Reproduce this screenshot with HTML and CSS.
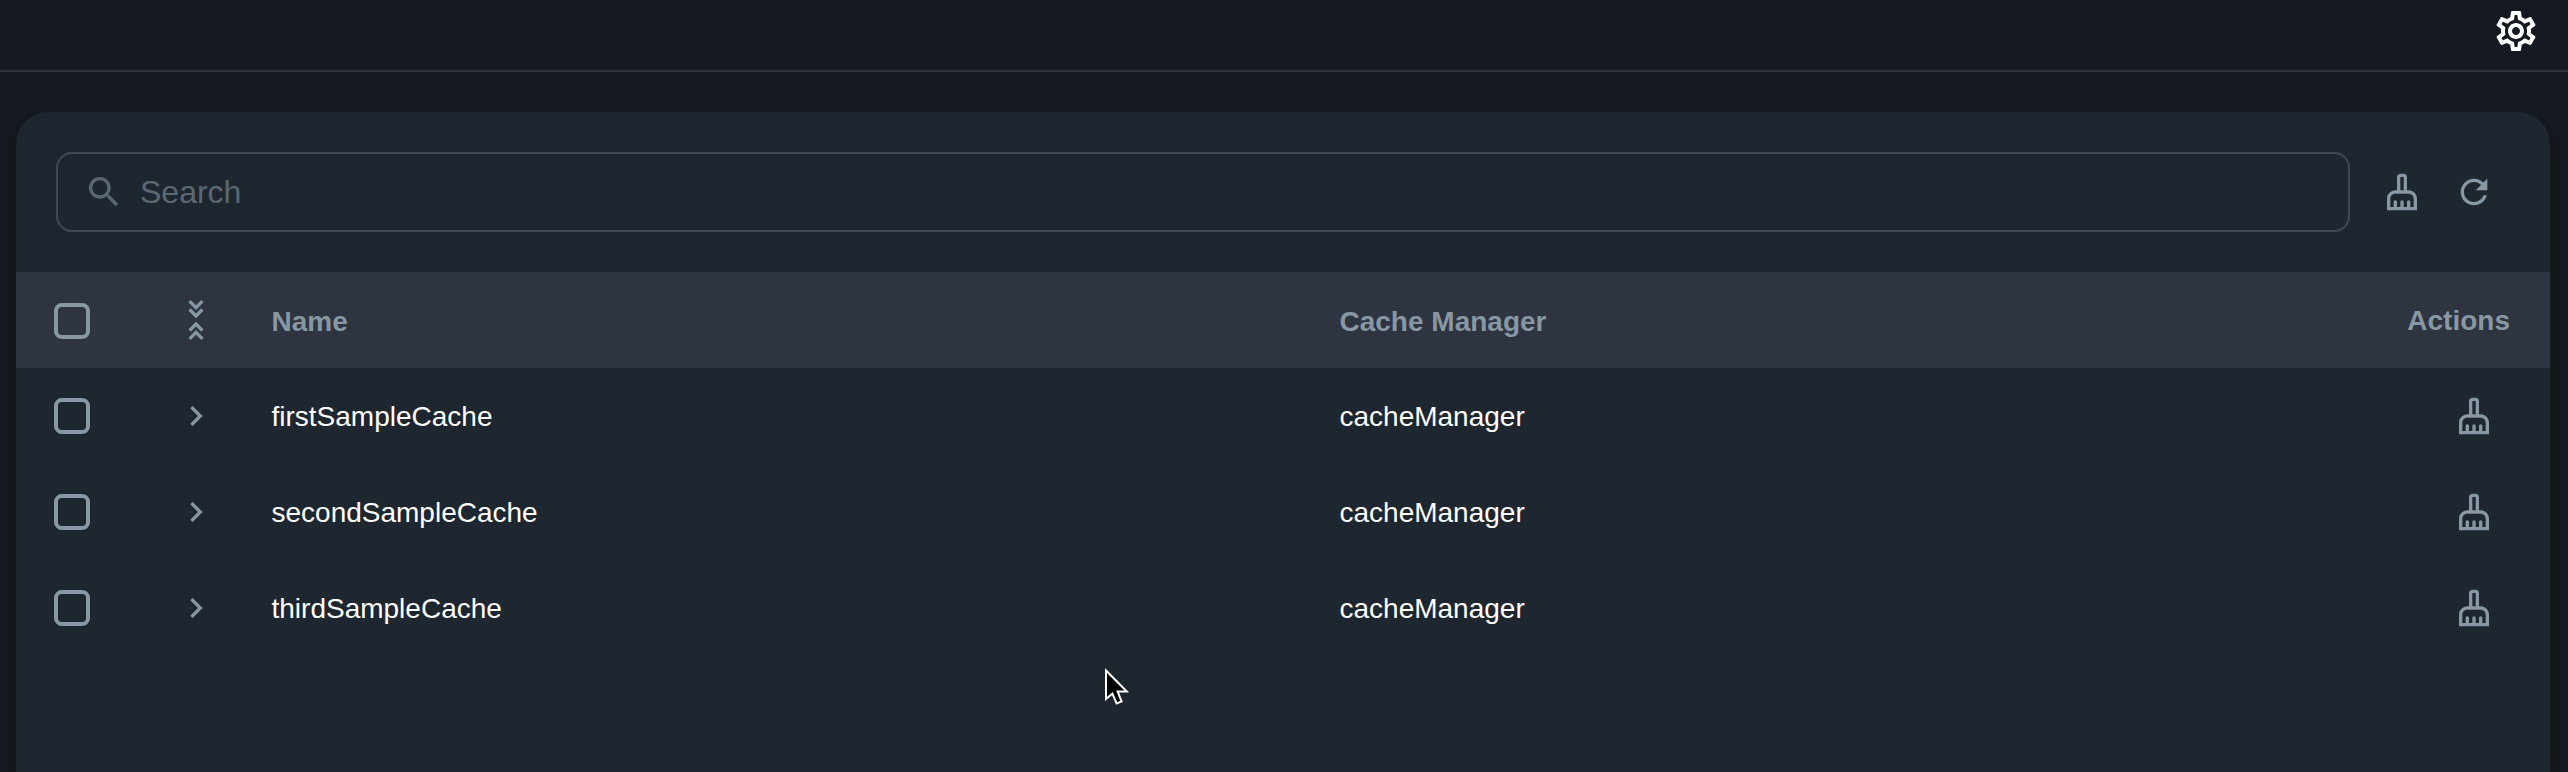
FILE: index.html
```html
<!DOCTYPE html>
<html lang="en">
<head>
<meta charset="utf-8">
<title>Caches</title>
<link rel="stylesheet" href="styles.css">
</head>
<body>
<svg class="sprite" aria-hidden="true">
  <symbol id="broom" viewBox="0 0 24 24"><path d="M16 11h-1V3c0-1.1-.9-2-2-2h-2c-1.1 0-2 .9-2 2v8H8c-2.76 0-5 2.24-5 5v7h18v-7c0-2.76-2.24-5-5-5zm-5-8h2v8h-2V3zm8 18h-2v-3c0-.55-.45-1-1-1s-1 .45-1 1v3h-2v-3c0-.55-.45-1-1-1s-1 .45-1 1v3H9v-3c0-.55-.45-1-1-1s-1 .45-1 1v3H5v-5c0-1.65 1.35-3 3-3h8c1.65 0 3 1.35 3 3v5z"/></symbol>
  <symbol id="chevron" viewBox="0 0 24 24"><path d="M10 6 8.59 7.41 13.17 12l-4.58 4.59L10 18l6-6z"/></symbol>
</svg>
<header class="topbar">
  <svg class="icon-settings" viewBox="0 0 24 24"><path d="M19.43 12.98c.04-.32.07-.64.07-.98 0-.34-.03-.66-.07-.98l2.11-1.65c.19-.15.24-.42.12-.64l-2-3.46c-.09-.16-.26-.25-.44-.25-.06 0-.12.01-.17.03l-2.49 1c-.52-.4-1.08-.73-1.69-.98l-.38-2.65C14.46 2.18 14.25 2 14 2h-4c-.25 0-.46.18-.49.42l-.38 2.65c-.61.25-1.17.59-1.69.98l-2.49-1c-.06-.02-.12-.03-.18-.03-.17 0-.34.09-.43.25l-2 3.46c-.13.22-.07.49.12.64l2.11 1.65c-.04.32-.07.65-.07.98 0 .33.03.66.07.98l-2.11 1.65c-.19.15-.24.42-.12.64l2 3.46c.09.16.26.25.44.25.06 0 .12-.01.17-.03l2.49-1c.52.4 1.08.73 1.69.98l.38 2.65c.03.24.24.42.49.42h4c.25 0 .46-.18.49-.42l.38-2.65c.61-.25 1.17-.59 1.69-.98l2.49 1c.06.02.12.03.18.03.17 0 .34-.09.43-.25l2-3.46c.12-.22.07-.49-.12-.64l-2.11-1.65zm-1.98-1.71c.04.31.05.52.05.73 0 .21-.02.43-.05.73l-.14 1.13.89.7 1.08.84-.7 1.21-1.27-.51-1.04-.42-.9.68c-.43.32-.84.56-1.25.73l-1.06.43-.16 1.13-.2 1.35h-1.4l-.19-1.35-.16-1.13-1.06-.43c-.43-.18-.83-.41-1.23-.71l-.91-.7-1.06.43-1.27.51-.7-1.21 1.08-.84.89-.7-.14-1.13c-.03-.31-.05-.54-.05-.74s.02-.43.05-.73l.14-1.13-.89-.7-1.08-.84.7-1.21 1.27.51 1.04.42.9-.68c.43-.32.84-.56 1.25-.73l1.06-.43.16-1.13.2-1.35h1.39l.19 1.35.16 1.13 1.06.43c.43.18.83.41 1.23.71l.91.7 1.06-.43 1.27-.51.7 1.21-1.07.85-.89.7.14 1.13zM12 8c-2.21 0-4 1.79-4 4s1.79 4 4 4 4-1.79 4-4-1.79-4-4-4zm0 6c-1.1 0-2-.9-2-2s.9-2 2-2 2 .9 2 2-.9 2-2 2z"/></svg>
</header>
<main class="card">
  <div class="toolbar">
    <div class="search">
      <svg class="icon" viewBox="0 0 24 24"><path d="M15.5 14h-.79l-.28-.27C15.41 12.59 16 11.11 16 9.5 16 5.91 13.09 3 9.5 3S3 5.91 3 9.5 5.91 16 9.5 16c1.61 0 3.09-.59 4.23-1.57l.27.28v.79l5 4.99L20.49 19l-4.99-5zm-6 0C7.01 14 5 11.99 5 9.5S7.01 5 9.5 5 14 7.01 14 9.5 11.99 14 9.5 14z"/></svg>
      <span class="placeholder">Search</span>
    </div>
    <svg class="icon"><use href="#broom"/></svg>
    <svg class="icon" viewBox="0 0 24 24"><path d="M17.65 6.35C16.2 4.9 14.21 4 12 4c-4.42 0-7.99 3.58-7.99 8s3.57 8 7.99 8c3.73 0 6.84-2.55 7.73-6h-2.08c-.82 2.33-3.04 4-5.65 4-3.31 0-6-2.69-6-6s2.69-6 6-6c1.66 0 3.14.69 4.22 1.78L13 11h7V4l-2.35 2.35z"/></svg>
  </div>
  <div class="row head">
    <span class="checkbox"></span>
    <svg class="icon" viewBox="0 0 24 24"><path d="M16.58 1.41 15.16 0l-3.17 3.17L8.82 0 7.41 1.41 11.99 6zm0 5L15.16 5l-3.17 3.17L8.82 5 7.41 6.41 11.99 11zM7.42 17.59 8.84 19l3.17-3.17L15.18 19l1.41-1.41L12.01 13zm0 5L8.84 24l3.17-3.17L15.18 24l1.41-1.41L12.01 18z"/></svg>
    <span class="text label">Name</span>
    <span class="text label">Cache Manager</span>
    <span class="text">Actions</span>
  </div>
  <div class="row">
    <span class="checkbox"></span>
    <svg class="icon"><use href="#chevron"/></svg>
    <span class="text">firstSampleCache</span>
    <span class="text">cacheManager</span>
    <svg class="icon clear"><use href="#broom"/></svg>
  </div>
  <div class="row">
    <span class="checkbox"></span>
    <svg class="icon"><use href="#chevron"/></svg>
    <span class="text">secondSampleCache</span>
    <span class="text">cacheManager</span>
    <svg class="icon clear"><use href="#broom"/></svg>
  </div>
  <div class="row">
    <span class="checkbox"></span>
    <svg class="icon"><use href="#chevron"/></svg>
    <span class="text">thirdSampleCache</span>
    <span class="text">cacheManager</span>
    <svg class="icon clear"><use href="#broom"/></svg>
  </div>
</main>
<svg class="cursor" viewBox="0 0 26 40"><path d="M2 2.5V31l6.4-5.4L12.6 35.4l5-2L13.6 23.6H22.8z"/></svg>
</body>
</html>
```
FILE: styles.css
```css
* { box-sizing: border-box; }
body {
  margin: 0;
  height: 772px;
  overflow: hidden;
  display: flex;
  flex-direction: column;
  background: #151921;
  color: #fff;
  font: 28px/32px "Liberation Sans", Arial, sans-serif;
}
.sprite { position: absolute; width: 0; height: 0; }
.topbar {
  flex: none;
  height: 72px;
  padding: 7px 28px 0 0;
  display: flex;
  justify-content: flex-end;
  align-items: flex-start;
  border-bottom: 2px solid #2d343f;
}
.icon-settings { width: 48px; height: 48px; fill: #fff; }
.card {
  flex: 1;
  margin: 40px 18px 0 16px;
  background: #1e2630;
  border-radius: 32px 32px 0 0;
  box-shadow: 0 8px 24px rgba(20, 24, 20, 0.8);
}
.toolbar {
  height: 160px;
  padding: 0 56px 0 40px;
  display: flex;
  align-items: center;
  gap: 32px;
}
.icon { width: 40px; height: 40px; flex: none; fill: #8797a3; }
.search {
  flex: 1;
  height: 80px;
  padding-left: 26px;
  display: flex;
  align-items: center;
  gap: 16px;
  border: 2px solid #434954;
  border-radius: 16px;
  color: #5b6872;
  font-size: 32px;
}
.search .icon { fill: #5b6872; }
.placeholder { line-height: 36px; }
.row {
  height: 96px;
  padding-right: 40px;
  display: grid;
  grid-template-columns: 112px 143.5px 1068px 1fr auto;
  align-items: center;
}
.row > .icon { margin-left: 48px; }
.row > .clear { margin: 0 16px 0 0; }
.text { padding-top: 2px; }
.head { background: #2e3440; color: #8797a3; font-weight: 700; }
.head .label, .head .checkbox { margin-top: 2px; }
.checkbox {
  width: 36px;
  height: 36px;
  margin-left: 38px;
  border: 4px solid #8797a3;
  border-radius: 8px;
}
.cursor {
  position: absolute;
  left: 1104px;
  top: 668px;
  width: 26px;
  height: 40px;
  fill: #000;
  stroke: #fff;
  stroke-width: 2;
}
```
